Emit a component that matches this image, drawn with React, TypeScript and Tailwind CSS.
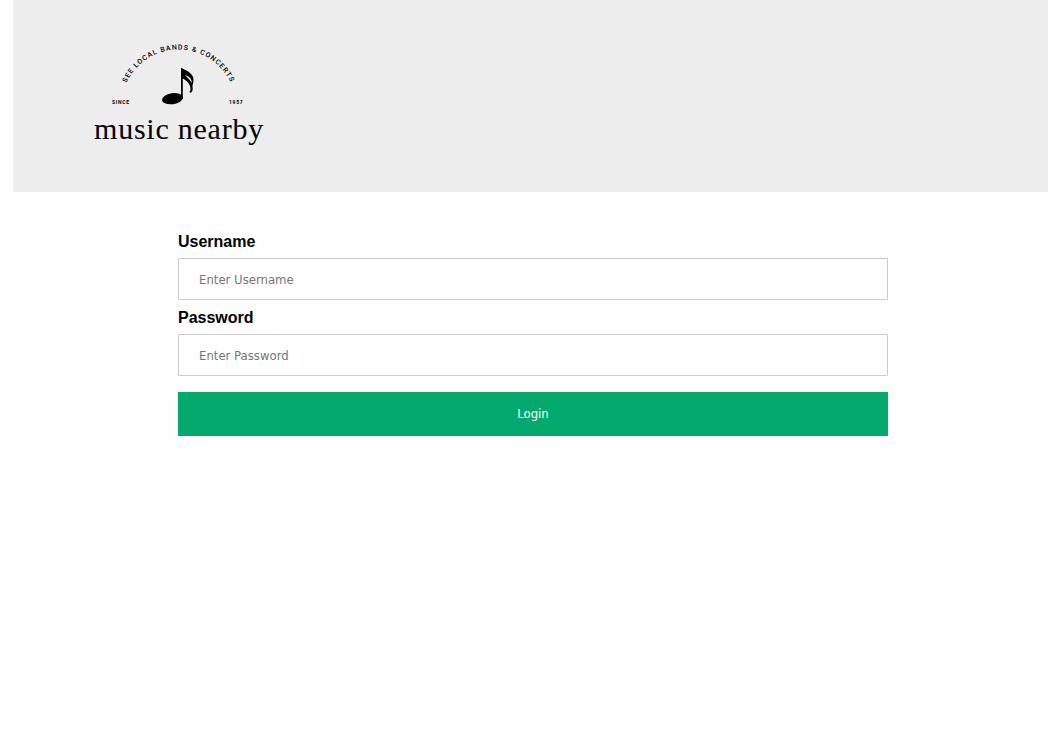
function Logo() {
  return (
    <svg
      viewBox="0 0 180 112"
      role="img"
      aria-label="music nearby"
      className="h-28 w-45 fill-black"
    >
      <path id="arc" d="M33 67 A57.5 57.5 0 0 1 148 67" fill="none" />
      <text className="font-['Roboto',sans-serif] text-[7px] font-medium tracking-[0.15em]">
        <textPath href="#arc" startOffset="50%" textAnchor="middle">
          SEE LOCAL BANDS &amp; CONCERTS
        </textPath>
      </text>
      <text x="24" y="64" className="font-['Roboto',sans-serif] text-[5px] font-bold tracking-[0.15em]">
        SINCE
      </text>
      <text x="141" y="64" className="font-['Roboto',sans-serif] text-[5px] font-bold tracking-[0.15em]">
        1957
      </text>
      <ellipse cx="84.5" cy="58.7" rx="10.6" ry="5.5" transform="rotate(-8 84.5 58.7)" />
      <path d="M93 27.8 C96.5 30 103.5 32 105.2 37.5 C105.8 40.5 105.2 43.5 104.4 46 C105.2 49.5 104.6 52 102.4 52.8 C101.2 52.7 101.3 51.4 102.4 50.2 C103.4 46 99.5 40.8 94.8 38.6 L94.8 59 L93 59 Z M97 35 C99 37.6 102.2 39.5 103.7 43 C104.2 39.5 101 36 97 35 Z" fillRule="evenodd" />
      <text x="91" y="99" textAnchor="middle" className="font-['Liberation_Serif',serif] text-[30px] tracking-wide">
        music nearby
      </text>
    </svg>
  );
}

type FieldProps = { id: string; label: string; type: string };

function Field({ id, label, type }: FieldProps) {
  return (
    <div className="flex flex-col gap-1.5">
      <label htmlFor={id} className="text-base leading-5 font-bold">
        {label}
      </label>
      <input
        id={id}
        name={id}
        type={type}
        placeholder={"Enter " + label}
        required
        className="h-[42px] w-full rounded-[1px] border border-[#ccc] bg-white px-5 font-['DejaVu_Sans_Condensed','DejaVu_Sans',sans-serif] text-[13px] placeholder:text-[#757575]"
      />
    </div>
  );
}

export default function App() {
  return (
    <div className="min-h-screen bg-[#fefefe] pr-4 pl-[13px] font-['Liberation_Sans',Arial,sans-serif] text-black">
      <header className="bg-[#ededed] px-[75px] py-10">
        <Logo />
      </header>
      <main className="pt-10 pr-40 pl-[165px]">
        <form onSubmit={(event) => event.preventDefault()} className="flex flex-col gap-4">
          <div className="flex flex-col gap-2">
            <Field id="username" label="Username" type="text" />
            <Field id="password" label="Password" type="password" />
          </div>
          <button
            type="submit"
            className="h-11 w-full cursor-pointer bg-[#04aa6d] font-['DejaVu_Sans_Condensed','DejaVu_Sans',sans-serif] text-[13px] text-white"
          >
            Login
          </button>
        </form>
      </main>
    </div>
  );
}
